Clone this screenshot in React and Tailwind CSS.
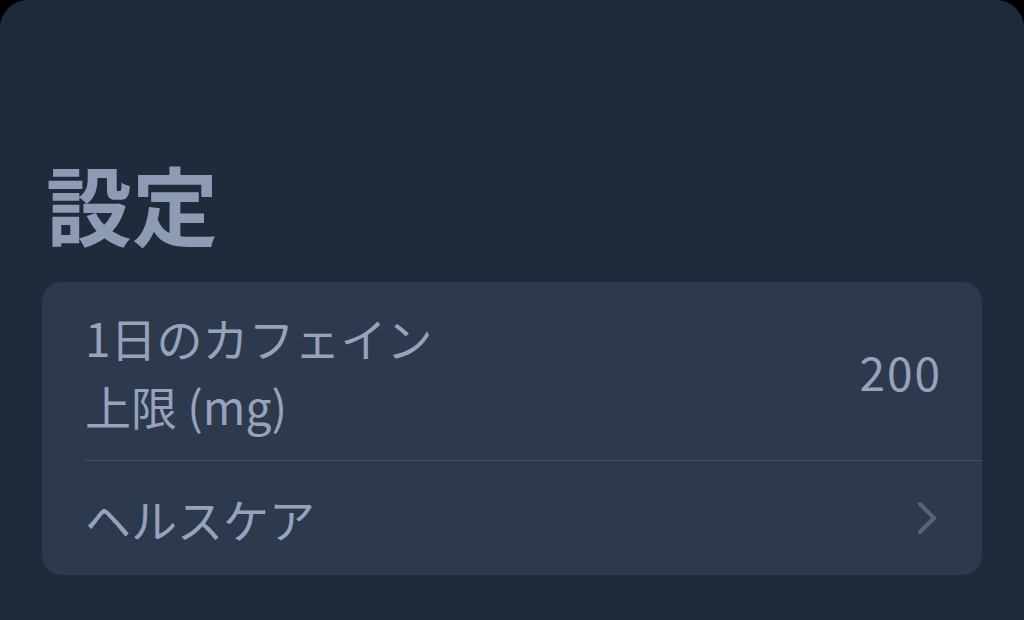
export default function App() {
  const font = { fontFamily: '"Noto Sans CJK JP", "Noto Sans", sans-serif' }

  return (
    <div className="w-[1024px] h-[620px] bg-black overflow-hidden" style={font}>
      <div className="h-full rounded-t-[28px] bg-[#1f2a3b] px-[42px] pt-[160px]">
        {/* Title */}
        <h1 className="text-[86px] leading-none font-bold text-[#8e9bb5] ml-[4px]">設定</h1>

        {/* Settings card */}
        <div className="mt-[36px] rounded-[20px] bg-[#2d3a4e] pl-[43px]">
          <div className="flex items-center justify-between pr-[44px] py-[21px] border-b border-[#414c5f]">
            <span className="max-w-[370px] text-[46px] leading-[68px] text-[#96a3bb]">
              1日のカフェイン上限 (mg)
            </span>
            <span className="-mr-[4px] text-[46px] leading-[68px] tracking-[2px] text-[#96a3bb]">200</span>
          </div>
          <div className="flex items-center justify-between pr-[44px] py-[23px]">
            <span className="text-[46px] leading-[68px] text-[#96a3bb]">ヘルスケア</span>
            <svg width="22" height="36" viewBox="0 0 22 36" fill="none">
              <path d="M4 4 L18 18 L4 32" stroke="#56647b" strokeWidth="4" strokeLinecap="round" strokeLinejoin="round" />
            </svg>
          </div>
        </div>
      </div>
    </div>
  )
}
